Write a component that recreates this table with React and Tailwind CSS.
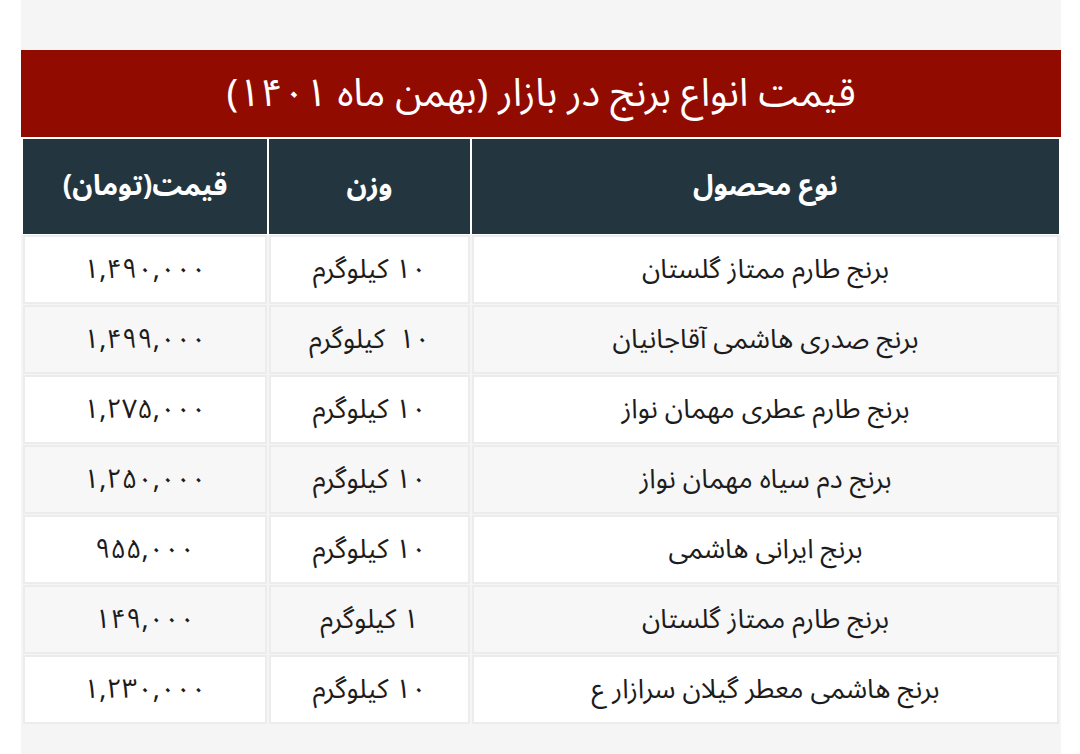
import React from "react";

const rows = [
  { name: "برنج طارم ممتاز گلستان", weight: "۱۰ کیلوگرم", price: "۱,۴۹۰,۰۰۰" },
  { name: "برنج صدری هاشمی آقاجانیان", weight: "۱۰ \u00a0کیلوگرم", price: "۱,۴۹۹,۰۰۰" },
  { name: "برنج طارم عطری مهمان نواز", weight: "۱۰ کیلوگرم", price: "۱,۲۷۵,۰۰۰" },
  { name: "برنج دم سیاه مهمان نواز", weight: "۱۰ کیلوگرم", price: "۱,۲۵۰,۰۰۰" },
  { name: "برنج ایرانی هاشمی", weight: "۱۰ کیلوگرم", price: "۹۵۵,۰۰۰" },
  { name: "برنج طارم ممتاز گلستان", weight: "۱ کیلوگرم", price: "۱۴۹,۰۰۰" },
  { name: "برنج هاشمی معطر گیلان سرازار ع", weight: "۱۰ کیلوگرم", price: "۱,۲۳۰,۰۰۰" },
];

const font = { fontFamily: '"Noto Sans Arabic", "DejaVu Sans", sans-serif' };

export default function App() {
  return (
    <div className="min-h-[754px] bg-white" style={font}>
      <div dir="rtl" className="ml-[21px] w-[1040px] min-h-[754px] bg-[#f5f5f5] pt-[50px]">
        {/* Title */}
        <div className="h-[87px] bg-[#910b00] flex items-center justify-center text-white text-[39px] leading-none">
          قیمت انواع برنج در بازار (بهمن ماه ۱۴۰۱)
        </div>

        {/* Header */}
        <div className="bg-white px-[2px] pt-[2px] pb-[1px]">
          <div className="grid grid-cols-[587px_201px_244px] gap-x-[2px] h-[95px]">
            {["نوع محصول", "وزن", "قیمت(تومان)"].map((h) => (
              <div key={h} className="bg-[#233640] flex items-center justify-center text-white text-[28px] font-bold leading-none">
                {h}
              </div>
            ))}
          </div>
        </div>

        {/* Body */}
        <div className="px-[2px] flex flex-col gap-y-[1px]">
          {rows.map((r, i) => {
            const bg = i % 2 === 0 ? "bg-white" : "bg-[#f7f7f7]";
            return (
              <div key={i} className="grid grid-cols-[587px_201px_244px] gap-x-[2px] h-[69px]">
                {[r.name, r.weight, r.price].map((v, j) => (
                  <div
                    key={j}
                    className={`${bg} border-2 border-[#ececec] flex items-center justify-center text-[27px] leading-none text-[#1c1c1c]`}
                  >
                    {v}
                  </div>
                ))}
              </div>
            );
          })}
        </div>
      </div>
    </div>
  );
}
